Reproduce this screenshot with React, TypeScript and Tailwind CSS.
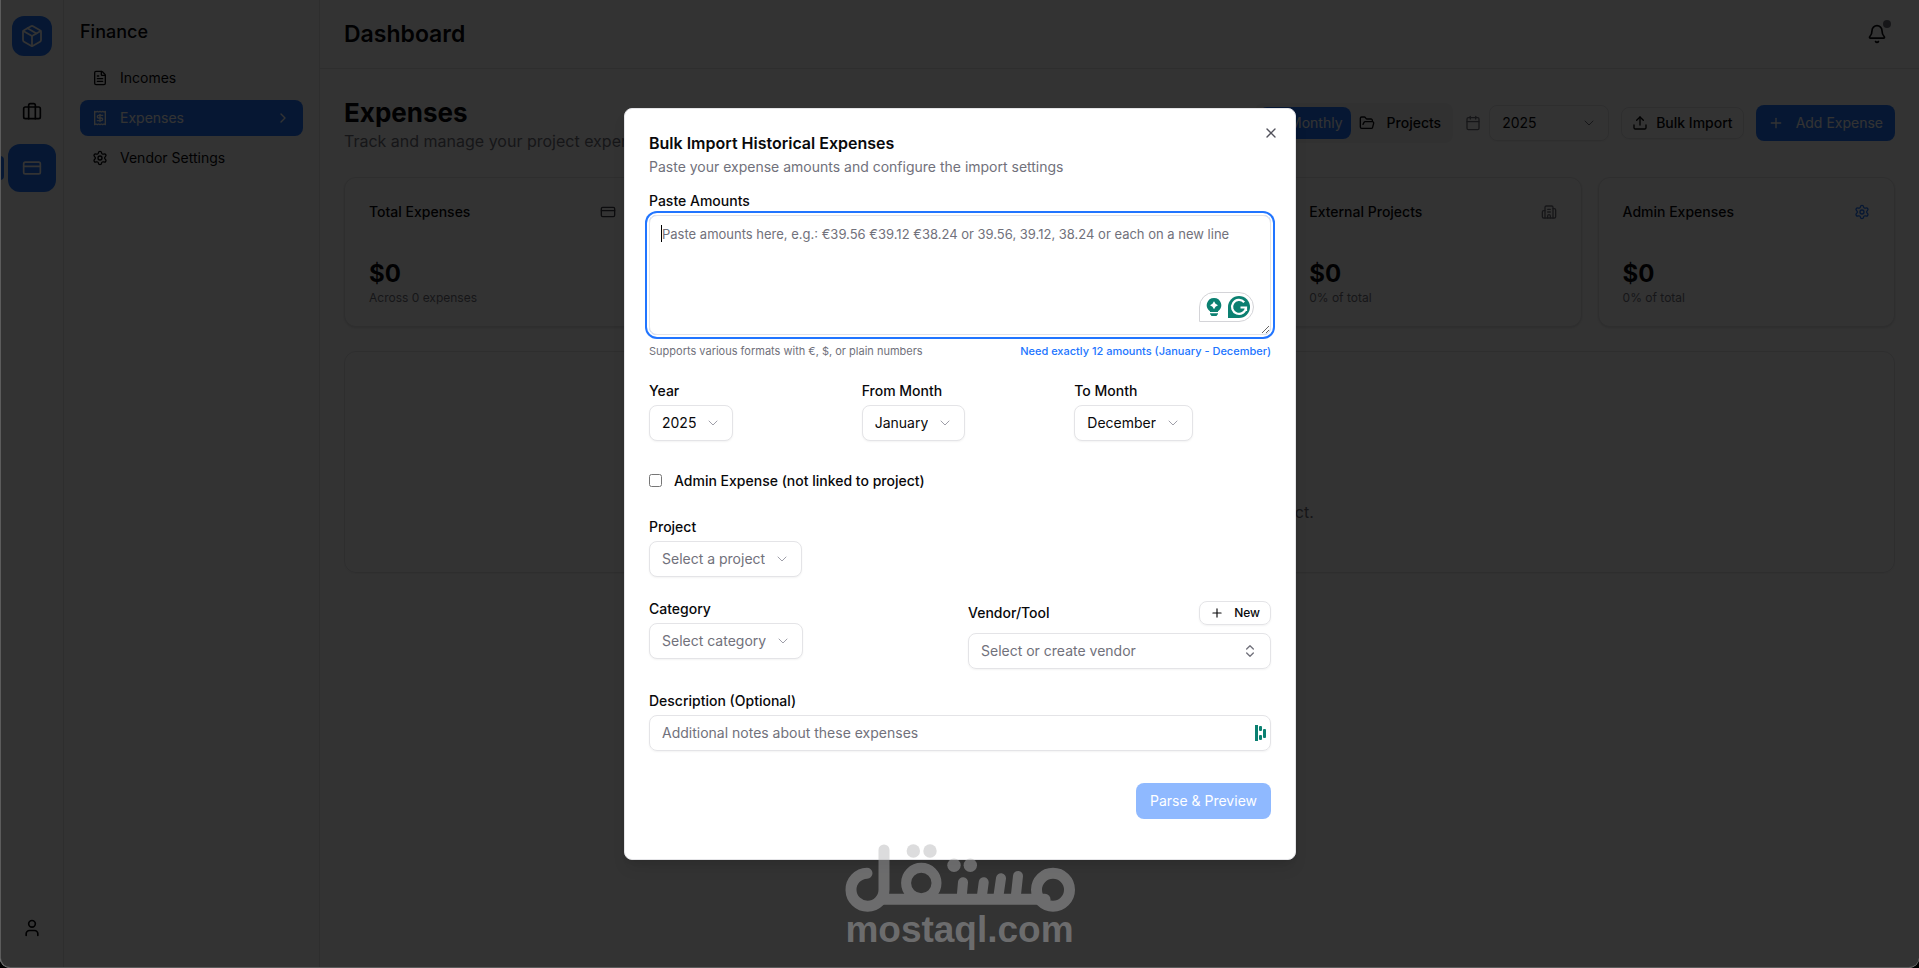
import { useState, type ReactNode } from "react";
import {
    Bell, Briefcase, Building2, Calendar, ChevronDown, ChevronRight, ChevronsUpDown, CreditCard,
    FileText, FolderOpen, Package, Plus, Settings, Upload, User, X,
} from "lucide-react";

const MONTHS = [
    "January", "February", "March", "April", "May", "June",
    "July", "August", "September", "October", "November", "December",
];

function ReceiptIcon() {
    return (
        <svg width="16" height="16" viewBox="0 0 24 24" fill="none" stroke="currentColor" strokeWidth="2" strokeLinecap="round" strokeLinejoin="round">
            <path d="M4 2v20l2-1 2 1 2-1 2 1 2-1 2 1 2-1 2 1V2l-2 1-2-1-2 1-2-1-2 1-2-1-2 1Z" />
            <path d="M16 8h-6a2 2 0 1 0 0 4h4a2 2 0 1 1 0 4H8" />
            <path d="M12 17.5v-11" />
        </svg>
    );
}

function Rail() {
    return (
        <aside className="flex w-16 shrink-0 flex-col items-center border-r border-zinc-200 pt-4 pb-5">
            <div className="flex size-10 items-center justify-center rounded-xl bg-[#2175ff] text-white"><Package size={24} strokeWidth={1.75} /></div>
            <nav className="mt-8 flex w-full flex-col items-center gap-2">
                <button aria-label="Projects" className="flex size-12 items-center justify-center rounded-xl"><Briefcase size={20} /></button>
                <div className="relative flex w-full justify-center">
                    <span className="absolute top-3 left-0 h-6 w-1 rounded-r-full bg-[#2175ff]" />
                    <button aria-label="Finance" className="flex size-12 items-center justify-center rounded-xl bg-[#2175ff] text-white"><CreditCard size={20} /></button>
                </div>
            </nav>
            <button aria-label="Account" className="mt-auto flex size-10 items-center justify-center"><User size={20} /></button>
        </aside>
    );
}

function NavItem({ icon, label, active = false }: { icon: ReactNode; label: string; active?: boolean }) {
    return (
        <a href="#" className={`flex h-9 items-center gap-3 rounded-lg px-3 text-sm ${active ? "bg-[#2175ff] text-white" : ""}`}>
            {icon}
            <span className="flex-1">{label}</span>
            {active && <ChevronRight size={16} />}
        </a>
    );
}

function StatCard({ title, icon, note }: { title?: string; icon?: ReactNode; note?: string }) {
    return (
        <div className="min-h-[150px] rounded-xl border border-zinc-200 bg-white p-6 pb-5 shadow-sm">
            {title && (
                <>
                    <div className="flex items-center justify-between">
                        <h3 className="text-sm leading-5 font-medium">{title}</h3>
                        {icon}
                    </div>
                    <div className="mt-9 text-2xl font-bold">$0</div>
                    <p className="text-xs text-zinc-500">{note}</p>
                </>
            )}
        </div>
    );
}

function Dashboard() {
    return (
        <main className="flex min-w-0 flex-1 flex-col">
            <header className="flex h-[69px] items-center justify-between border-b border-zinc-200 px-6">
                <h1 className="text-[23px] font-semibold">Dashboard</h1>
                <button aria-label="Notifications" className="relative mr-1 p-1">
                    <Bell size={20} />
                    <span className="absolute top-0 right-0 size-2 rounded-full bg-zinc-500" />
                </button>
            </header>
            <div className="flex flex-col gap-6 p-6">
                <div className="flex items-center justify-between">
                    <div className="pt-1">
                        <h2 className="text-[26px] leading-8 font-bold">Expenses</h2>
                        <p className="text-base leading-6 text-zinc-500">Track and manage your project expenses</p>
                    </div>
                    <div className="flex items-center gap-3 text-sm font-medium">
                        <div className="flex rounded-lg bg-zinc-100 p-1">
                            <button className="flex h-8 items-center gap-1.5 rounded-lg bg-[#2175ff] px-2 font-normal text-white"><Calendar size={16} />Monthly</button>
                            <button className="flex h-8 items-center gap-3 px-2"><FolderOpen size={16} />Projects</button>
                        </div>
                        <div className="flex items-center gap-2 font-normal">
                            <Calendar size={16} className="text-zinc-500" />
                            <div className="relative w-[120px]">
                                <select aria-label="Filter by year" className="h-9 w-full appearance-none rounded-lg border border-zinc-200 px-3 shadow-xs">
                                    <option>2025</option>
                                    <option>2024</option>
                                </select>
                                <ChevronDown size={16} strokeWidth={1.5} className="pointer-events-none absolute top-2.5 right-3 text-zinc-500" />
                            </div>
                        </div>
                        <button className="flex h-8 items-center gap-2 rounded-lg border border-zinc-200 px-2.5 shadow-xs"><Upload size={16} />Bulk Import</button>
                        <button className="flex h-9 items-center gap-3 rounded-lg bg-[#2175ff] px-3 font-normal text-white"><Plus size={16} />Add Expense</button>
                    </div>
                </div>
                <section className="grid grid-cols-5 gap-4">
                    <StatCard title="Total Expenses" icon={<CreditCard size={16} className="text-zinc-700" />} note="Across 0 expenses" />
                    <StatCard />
                    <StatCard />
                    <StatCard title="External Projects" icon={<Building2 size={16} className="text-zinc-500" />} note="0% of total" />
                    <StatCard title="Admin Expenses" icon={<Settings size={16} className="text-[#2175ff]" />} note="0% of total" />
                </section>
                <section className="flex h-[222px] items-end justify-center rounded-xl border border-zinc-200 pb-12 shadow-xs">
                    <p className="text-zinc-500">Add your first expense to start tracking this project.</p>
                </section>
            </div>
        </main>
    );
}

function Label({ htmlFor, children }: { htmlFor: string; children: ReactNode }) {
    return <label htmlFor={htmlFor} className="text-sm leading-4 font-medium">{children}</label>;
}

function SelectField({ id, label, value, options, onChange, muted = false }: {
    id: string; label: string; value: string; options: string[]; onChange?: (v: string) => void; muted?: boolean
}) {
    return (
        <div className="flex flex-col items-start gap-1.5">
            <Label htmlFor={id}>{label}</Label>
            <div className="relative">
                <select
                    id={id}
                    value={value}
                    onChange={(e) => onChange?.(e.target.value)}
                    className={`field-sizing-content h-9 appearance-none rounded-lg border border-zinc-200 bg-white pr-9 pl-3 text-sm shadow-xs ${muted ? "text-zinc-500" : ""}`}
                >
                    {options.map((o) => <option key={o}>{o}</option>)}
                </select>
                <ChevronDown size={16} strokeWidth={1.5} className="pointer-events-none absolute top-2.5 right-3 text-zinc-400" />
            </div>
        </div>
    );
}

function WritingAssistant() {
    return (
        <div className="absolute right-[17px] bottom-[13px] flex h-[30px] w-[55px] items-center gap-1.5 rounded-[15px] rounded-bl-none border border-zinc-300 bg-white pl-1.5">
            <svg width="16" height="20" viewBox="0 0 16 20">
                <path d="M8 1a7.2 7.2 0 0 0-4 13.2V15h8v-.8A7.2 7.2 0 0 0 8 1Z" fill="#0b8071" />
                <path d="M8 4.2 9.5 6.7 12 8.2 9.5 9.7 8 12.2 6.5 9.7 4 8.2 6.5 6.7Z" fill="#fff" />
                <path d="M4 16.3h8v.8L10.5 19h-5L4 17.1Z" fill="#0b8071" />
            </svg>
            <svg width="22" height="22" viewBox="0 0 22 22">
                <path d="M11 0a11 11 0 1 1 0 22H0V11A11 11 0 0 1 11 0Z" fill="#0b8071" />
                <path d="M16.2 6.2A7 7 0 1 0 18 11.5H12.5M18 11.5V15" fill="none" stroke="#fff" strokeWidth="2.2" />
            </svg>
        </div>
    );
}

function ImportDialog() {
    const [amounts, setAmounts] = useState("");
    const [year, setYear] = useState("2025");
    const [from, setFrom] = useState("January");
    const [to, setTo] = useState("December");
    const [admin, setAdmin] = useState(false);

    const needed = MONTHS.indexOf(to) - MONTHS.indexOf(from) + 1;

    return (
        <div role="dialog" aria-labelledby="import-title" className="relative w-full max-w-2xl rounded-lg border border-zinc-200 bg-white p-6 shadow-lg">
            <button aria-label="Close" className="absolute top-4 right-4 text-zinc-600"><X size={16} /></button>
            <h2 id="import-title" className="text-base leading-5 font-semibold">Bulk Import Historical Expenses</h2>
            <p className="mt-1 text-sm leading-5 text-zinc-500">Paste your expense amounts and configure the import settings</p>

            <form className="mt-4 flex flex-col gap-6" onSubmit={(e) => e.preventDefault()}>
                <div className="flex flex-col">
                    <Label htmlFor="amounts">Paste Amounts</Label>
                    <div className="relative mt-1.5 flex">
                        <textarea
                            id="amounts"
                            value={amounts}
                            onChange={(e) => setAmounts(e.target.value)}
                            className="h-[120px] w-full resize-y rounded-lg border border-zinc-200 px-3 py-2 text-[13px] leading-5 ring-2 ring-[#2175ff] ring-offset-2 outline-none placeholder:text-zinc-500"
                            placeholder="Paste amounts here, e.g.: €39.56 €39.12 €38.24 or 39.56, 39.12, 38.24 or each on a new line"
                        />
                        {!amounts && <span className="pointer-events-none absolute top-2.5 left-3 h-[17px] w-px bg-black" />}
                        <WritingAssistant />
                    </div>
                    <div className="mt-2 flex justify-between text-[11px] leading-4">
                        <span className="text-zinc-500">Supports various formats with €, $, or plain numbers</span>
                        <span className="font-medium text-[#2175ff]">Need exactly {needed} amounts ({from} - {to})</span>
                    </div>
                </div>

                <div className="grid grid-cols-3 gap-4">
                    <SelectField id="year" label="Year" value={year} options={["2025", "2024", "2023"]} onChange={setYear} />
                    <SelectField id="from" label="From Month" value={from} options={MONTHS} onChange={setFrom} />
                    <SelectField id="to" label="To Month" value={to} options={MONTHS} onChange={setTo} />
                </div>

                <div className="flex items-center gap-3 pt-2 pb-1.5">
                    <input id="admin" type="checkbox" checked={admin} onChange={(e) => setAdmin(e.target.checked)} className="size-[13px]" />
                    <Label htmlFor="admin">Admin Expense (not linked to project)</Label>
                </div>

                <SelectField id="project" label="Project" value="Select a project" options={["Select a project"]} muted />

                <div className="grid grid-cols-2 gap-4">
                    <SelectField id="category" label="Category" value="Select category" options={["Select category"]} muted />
                    <div className="flex flex-col gap-2">
                        <div className="flex items-center justify-between">
                            <Label htmlFor="vendor">Vendor/Tool</Label>
                            <button type="button" className="flex h-6 items-center gap-2.5 rounded-lg border border-zinc-200 px-2.5 text-xs font-medium shadow-xs"><Plus size={14} />New</button>
                        </div>
                        <button id="vendor" type="button" className="flex h-9 items-center justify-between rounded-lg border border-zinc-200 px-3 text-sm text-zinc-500 shadow-xs">
                            Select or create vendor
                            <ChevronsUpDown size={16} />
                        </button>
                    </div>
                </div>

                <div className="flex flex-col gap-1.5">
                    <Label htmlFor="description">Description (Optional)</Label>
                    <div className="relative flex">
                        <input id="description" type="text" placeholder="Additional notes about these expenses" className="h-9 w-full rounded-lg border border-zinc-200 px-3 text-sm shadow-xs placeholder:text-zinc-500" />
                        <svg width="12" height="16" viewBox="0 0 12 16" className="absolute top-2.5 right-1" fill="#0b8071">
                            <rect x="0" y="0" width="3" height="16" />
                            <rect x="4" y="1" width="3" height="5" rx="1" />
                            <rect x="4" y="10" width="3" height="5" rx="1" />
                            <rect x="8" y="4" width="3" height="9" rx="1" />
                        </svg>
                    </div>
                </div>

                <div className="flex justify-end pt-2 pb-4">
                    <button type="submit" disabled className="h-9 rounded-lg bg-[#2175ff] px-3.5 text-sm text-white disabled:opacity-50">Parse &amp; Preview</button>
                </div>
            </form>
        </div>
    );
}

function Watermark() {
    return (
        <div className="pointer-events-none absolute bottom-5 left-1/2 flex -translate-x-1/2 flex-col items-center text-[#b2b2b4] opacity-45">
            <svg width="230" height="68" viewBox="0 0 230 68" fill="none" stroke="currentColor" strokeWidth="11" strokeLinecap="round">
                <path d="M39 6V45.7A16.5 16.5 0 1 1 22 29.2" />
                <path d="M39 55.3H200" />
                <circle cx="76.3" cy="39" r="15.2" strokeWidth="10" />
                <circle cx="208" cy="45.7" r="16.5" />
                <path d="M118 38.3 116.5 55M138.7 38.3 136.5 55M156 34.3 153 55M173 32 170.5 55" strokeWidth="10" />
                <g fill="currentColor" stroke="none">
                    <circle cx="68.3" cy="7" r="6.7" />
                    <circle cx="85" cy="7" r="6.7" />
                    <circle cx="109" cy="21.3" r="6.7" />
                    <circle cx="125.3" cy="21.3" r="6.7" />
                </g>
            </svg>
            <span className="font-['Liberation_Sans',sans-serif] text-[37px] leading-9 font-bold">mostaql.com</span>
        </div>
    );
}

export default function App() {
    return (
        <div className="relative flex min-h-screen bg-black font-[Inter,sans-serif] text-zinc-950">
            <div className="flex flex-1 overflow-hidden rounded-b-[10px] bg-white">
                <Rail />
                <aside className="w-64 shrink-0 border-r border-zinc-200 px-4 pt-[18px]">
                    <h2 className="text-lg leading-7 font-medium">Finance</h2>
                    <nav className="mt-3.5 flex flex-col gap-1">
                        <NavItem icon={<FileText size={16} />} label="Incomes" />
                        <NavItem icon={<ReceiptIcon />} label="Expenses" active />
                        <NavItem icon={<Settings size={16} />} label="Vendor Settings" />
                    </nav>
                </aside>
                <Dashboard />
            </div>
            <div className="absolute inset-0 flex items-center justify-center rounded-b-[10px] border-b border-l border-[#5c5c5c] bg-black/80">
                <ImportDialog />
            </div>
            <Watermark />
        </div>
    );
}
